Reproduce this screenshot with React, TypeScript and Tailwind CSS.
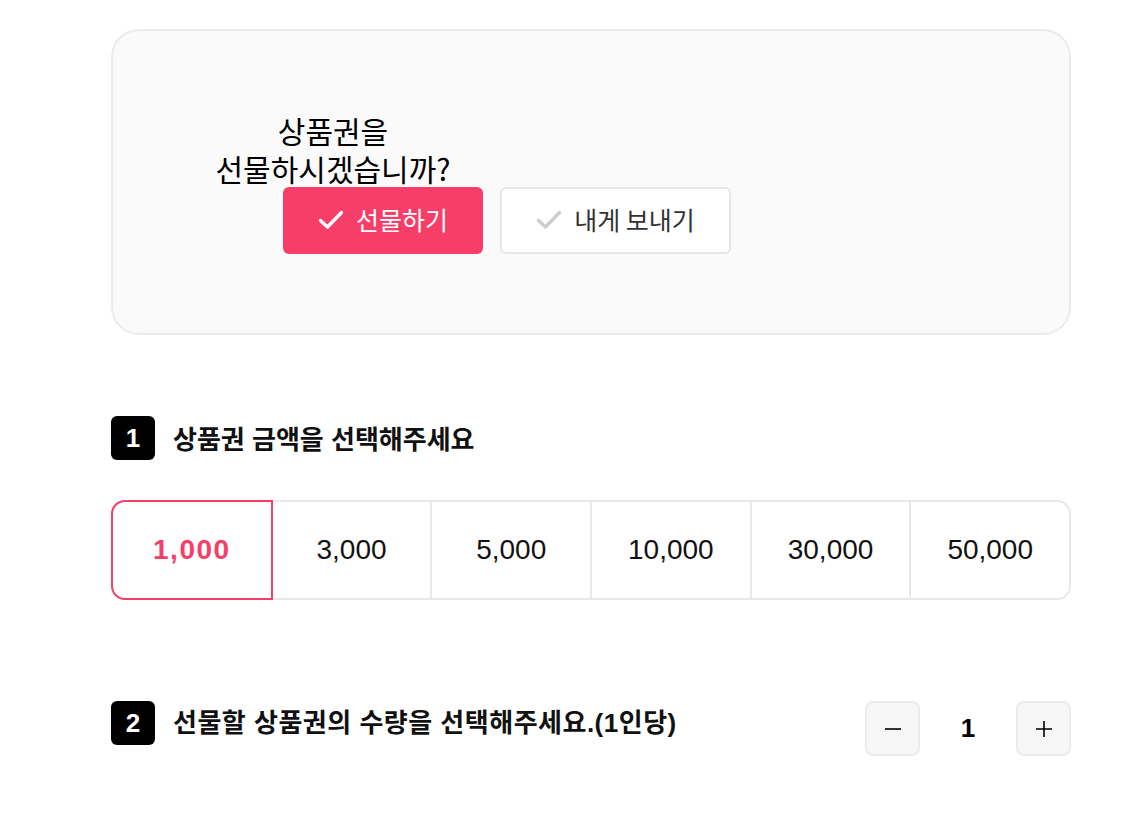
import React, { useState } from 'react';

const KR = { fontFamily: '"Noto Sans CJK KR", "Noto Sans", sans-serif' };
const MIX = { fontFamily: '"Liberation Sans", "Noto Sans CJK KR", sans-serif' };

const amounts = ['1,000', '3,000', '5,000', '10,000', '30,000', '50,000'];

function CheckIcon({ color }: { color: string }) {
  return (
    <svg width="26" height="20" viewBox="0 0 26 20" fill="none">
      <path d="M2.5 10.5 9.5 17 23.5 2.5" stroke={color} strokeWidth="3.4" strokeLinecap="round" strokeLinejoin="round" />
    </svg>
  );
}

function StepBadge({ n }: { n: number }) {
  return (
    <div
      className="flex h-[44px] w-[44px] shrink-0 items-center justify-center rounded-[6px] bg-black text-[26px] font-bold text-white"
      style={MIX}
    >
      {n}
    </div>
  );
}

export default function App() {
  const [selected, setSelected] = useState(0);
  const [qty, setQty] = useState(1);

  return (
    <div className="min-h-screen bg-white">
      <div className="ml-[111px] w-[960px] pt-[29px]">
        {/* gift question card */}
        <div className="flex h-[306px] flex-col justify-center rounded-[28px] border-2 border-[#ebebeb] bg-[#fafafa]">
          <div className="ml-[81px] w-[278px] text-center text-[30px] leading-[38px] text-black" style={KR}>
            상품권을
            <br />
            선물하시겠습니까?
          </div>
          <div className="ml-[170px] flex gap-[17px]" style={KR}>
            <button className="flex h-[67px] w-[200px] items-center justify-center gap-[12px] rounded-[6px] bg-[#f63e68] text-[25px] text-white">
              <CheckIcon color="#ffffff" />
              <span>선물하기</span>
            </button>
            <button className="flex h-[67px] w-[231px] items-center justify-center gap-[12px] rounded-[6px] border-2 border-[#e6e6e6] bg-white text-[25px] text-[#333]">
              <CheckIcon color="#cccccc" />
              <span>내게 보내기</span>
            </button>
          </div>
        </div>

        {/* step 1 */}
        <div className="mt-[81px] flex items-center gap-[18px]">
          <StepBadge n={1} />
          <h2 className="mt-[4px] text-[26px] font-bold text-[#111]" style={MIX}>
            상품권 금액을 선택해주세요
          </h2>
        </div>

        <div className="mt-[40px] flex h-[100px]" style={MIX}>
          {amounts.map((a, i) => {
            const active = i === selected;
            return (
              <button
                key={a}
                onClick={() => setSelected(i)}
                className={
                  'flex flex-1 items-center justify-center border-2 text-[28px] ' +
                  (i > 0 ? '-ml-[2px] ' : '') +
                  (i === 0 ? 'rounded-l-[14px] ' : '') +
                  (i === amounts.length - 1 ? 'rounded-r-[14px] ' : '') +
                  (active
                    ? 'relative z-10 border-[#f63e68] font-bold tracking-[1.5px] text-[#f63e68]'
                    : 'border-[#e8e8e8] bg-white text-[#111]')
                }
              >
                {a}
              </button>
            );
          })}
        </div>

        {/* step 2 */}
        <div className="mt-[101px] flex items-start justify-between">
          <div className="flex items-center gap-[18px]">
            <StepBadge n={2} />
            <h2 className="text-[26px] font-bold tracking-[0.5px] text-[#111]" style={MIX}>
              선물할 상품권의 수량을 선택해주세요.(1인당)
            </h2>
          </div>
          <div className="flex items-center">
            <button
              onClick={() => setQty(Math.max(1, qty - 1))}
              className="flex h-[55px] w-[55px] items-center justify-center rounded-[8px] border-2 border-[#ebebeb] bg-[#f6f6f6]"
            >
              <svg width="18" height="18" viewBox="0 0 18 18">
                <path d="M1 9h16" stroke="#000" strokeWidth="1.6" />
              </svg>
            </button>
            <div className="w-[96px] text-center text-[26px] font-bold text-black" style={MIX}>
              {qty}
            </div>
            <button
              onClick={() => setQty(qty + 1)}
              className="flex h-[55px] w-[55px] items-center justify-center rounded-[8px] border-2 border-[#ebebeb] bg-[#f6f6f6]"
            >
              <svg width="18" height="18" viewBox="0 0 18 18">
                <path d="M1 9h16M9 1v16" stroke="#000" strokeWidth="1.6" />
              </svg>
            </button>
          </div>
        </div>
      </div>
    </div>
  );
}
